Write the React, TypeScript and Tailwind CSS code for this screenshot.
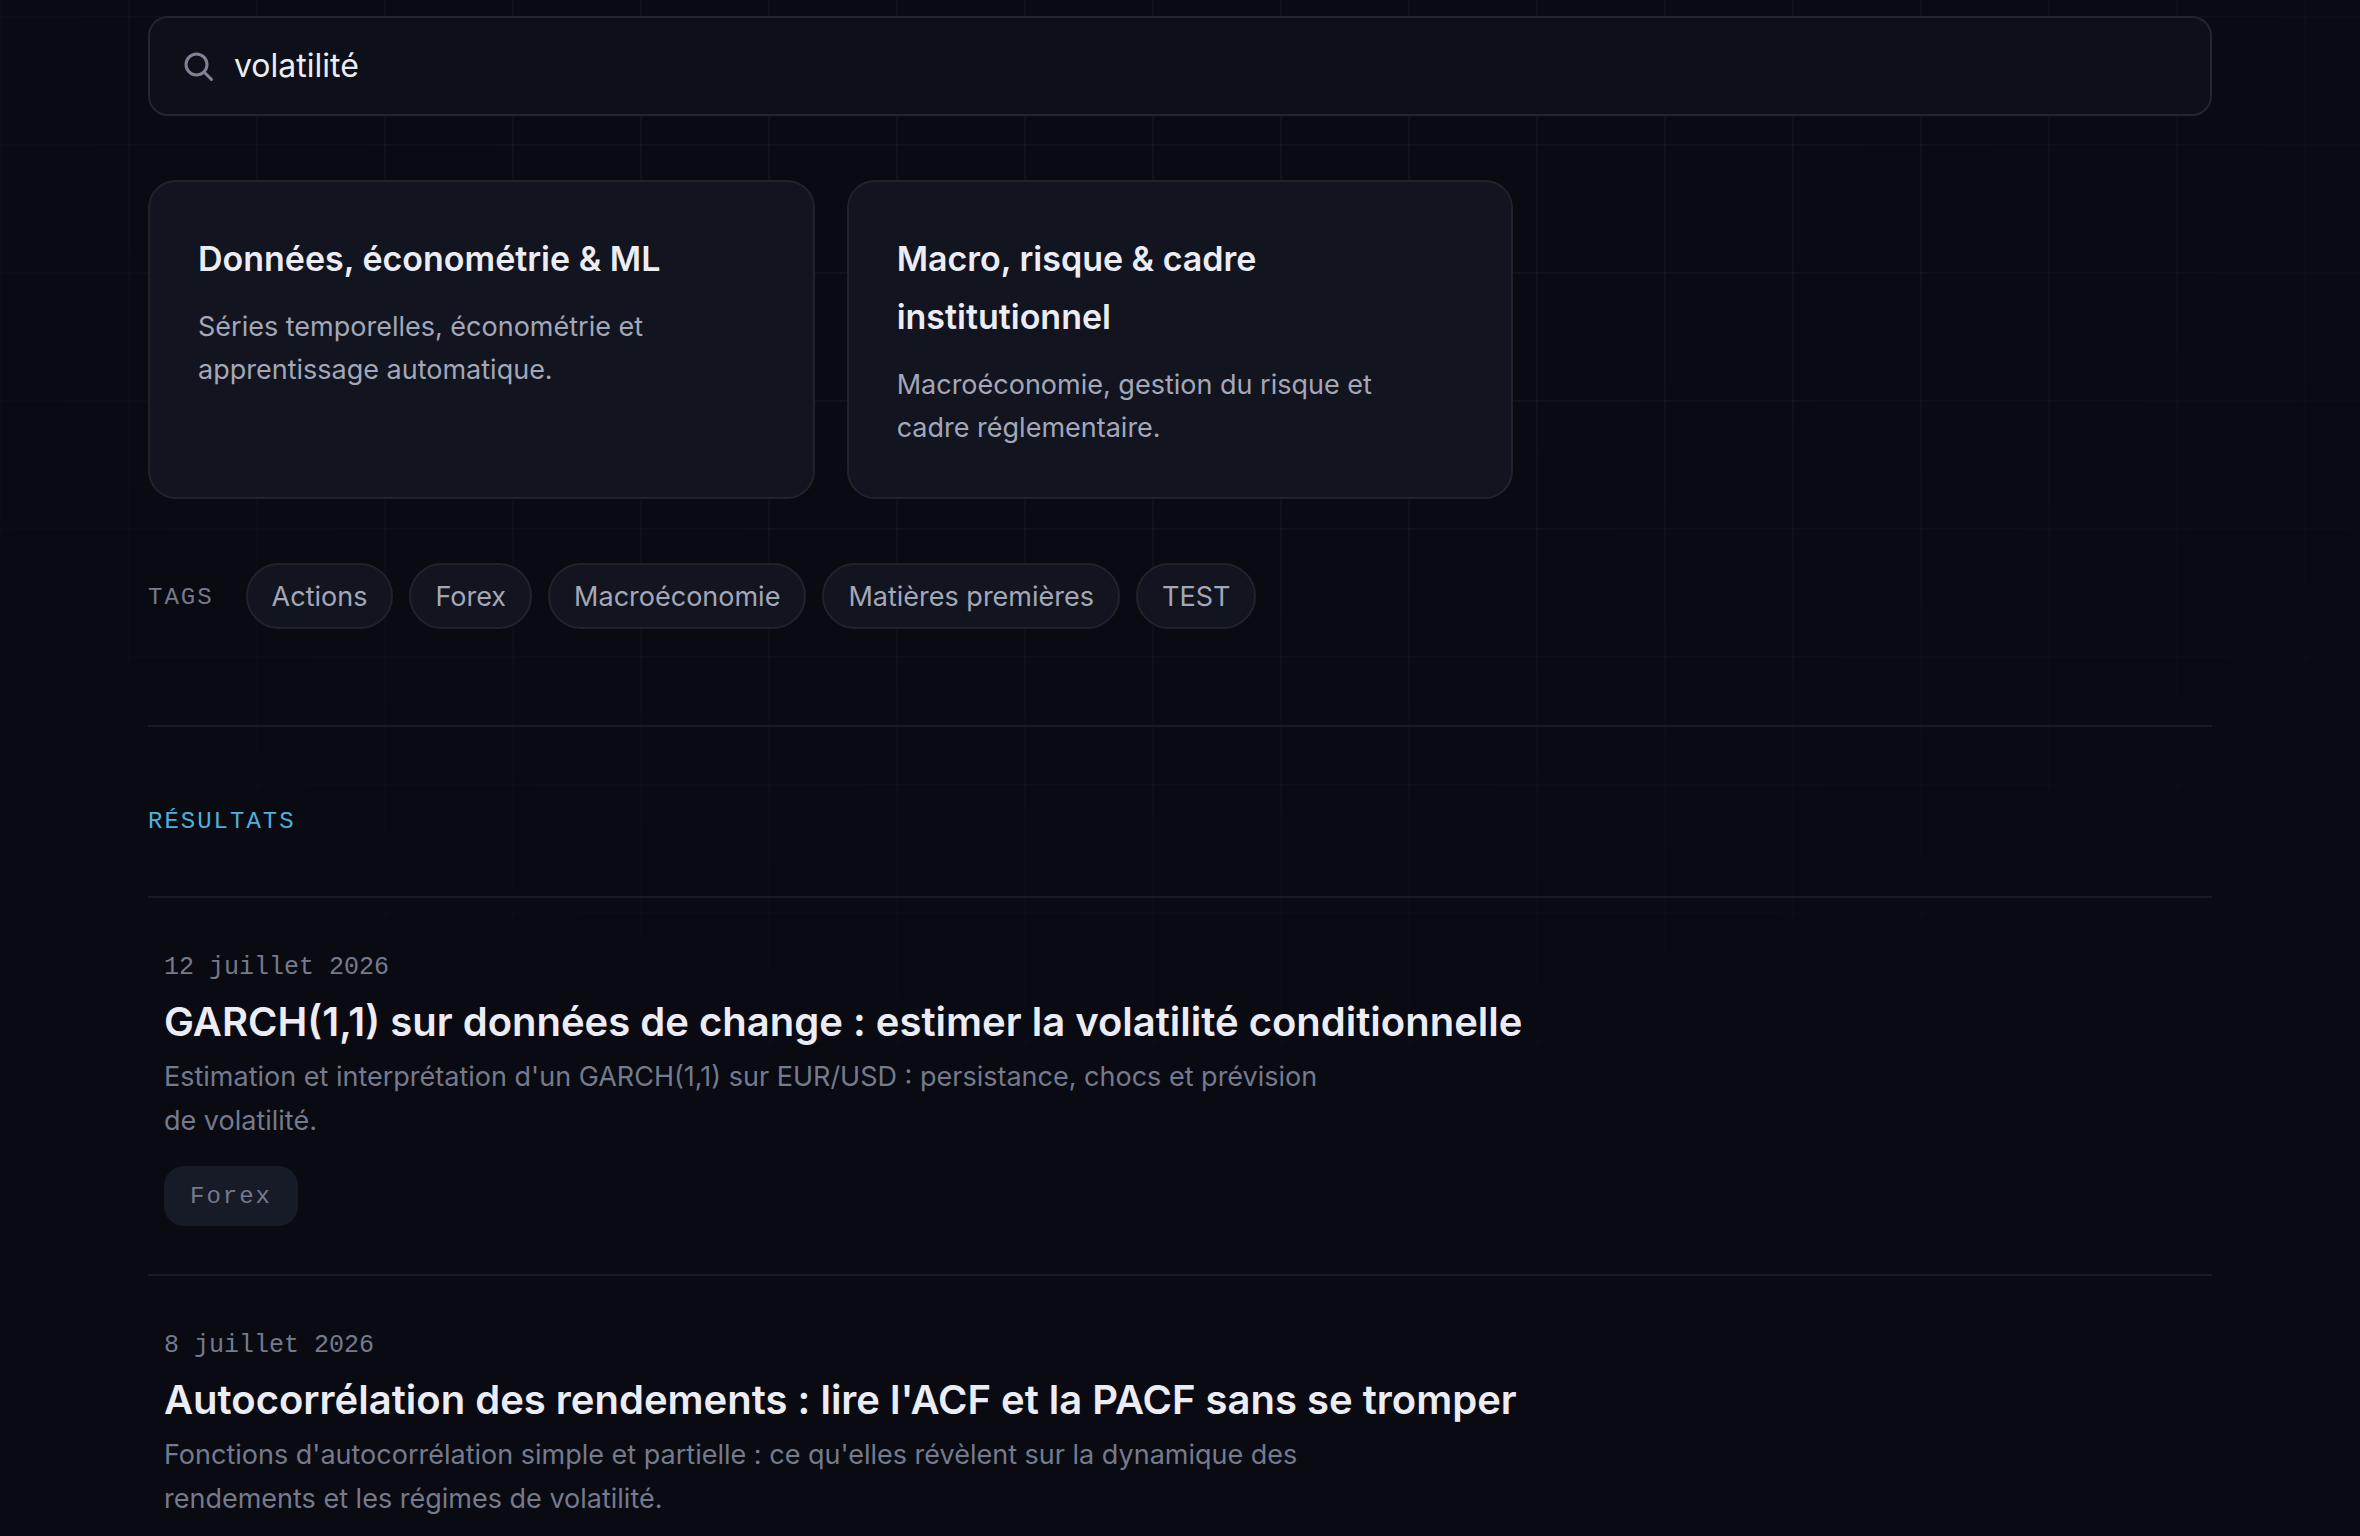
import { useState } from 'react';
import type { ChangeEvent } from 'react';

const categories = [
  {
    title: 'Données, économétrie & ML',
    description: 'Séries temporelles, économétrie et apprentissage automatique.',
  },
  {
    title: 'Macro, risque & cadre institutionnel',
    description: 'Macroéconomie, gestion du risque et cadre réglementaire.',
  },
];

const tags = ['Actions', 'Forex', 'Macroéconomie', 'Matières premières', 'TEST'];

const articles = [
  {
    date: '12 juillet 2026',
    title: 'GARCH(1,1) sur données de change : estimer la volatilité conditionnelle',
    description: "Estimation et interprétation d'un GARCH(1,1) sur EUR/USD : persistance, chocs et prévision de volatilité.",
    tags: ['Forex'],
  },
  {
    date: '8 juillet 2026',
    title: "Autocorrélation des rendements : lire l'ACF et la PACF sans se tromper",
    description:
      "Fonctions d'autocorrélation simple et partielle : ce qu'elles révèlent sur la dynamique des rendements et les régimes de volatilité.",
    tags: [],
  },
];

const SearchIcon = () => (
  <svg
    className="size-9 shrink-0 text-[#7f8294]"
    viewBox="0 0 24 24"
    fill="none"
    stroke="currentColor"
    strokeWidth="2"
    strokeLinecap="round"
    aria-hidden="true"
  >
    <circle cx="11" cy="11" r="7" />
    <path d="m21 21-4.5-4.5" />
  </svg>
);

const App = () => {
  const [query, setQuery] = useState('volatilité');

  const onChange = (e: ChangeEvent<HTMLInputElement>) => {
    setQuery(e.target.value);
  };

  return (
    <div className="relative isolate h-screen overflow-hidden bg-[#090a12] font-['Inter','Liberation_Sans',sans-serif] text-[#ececf4]">
      {/* faded grid behind the page */}
      <div className="pointer-events-none absolute inset-0 -z-10 bg-[linear-gradient(to_right,rgba(255,255,255,0.035)_2px,transparent_2px),linear-gradient(to_bottom,rgba(255,255,255,0.035)_2px,transparent_2px)] bg-[size:128px_128px] bg-[position:0_16px] [mask-image:radial-gradient(ellipse_72%_82%_at_50%_0%,black_30%,transparent_100%)]" />

      <main className="mx-auto max-w-[2064px] pt-4">
        <label className="flex h-[100px] items-center gap-[18px] rounded-[20px] border-2 border-[#22242e] bg-[#0d1018] px-[30px]">
          <SearchIcon />
          <input
            type="text"
            aria-label="Rechercher"
            className="min-w-0 flex-1 bg-transparent text-[32px] text-[#ececf4] outline-none"
            value={query}
            onChange={onChange}
          />
        </label>

        <nav className="mt-16 grid grid-cols-3 gap-8">
          {categories.map((category) => (
            <a
              key={category.title}
              href="#resultats"
              className="flex flex-col gap-[17px] rounded-[28px] border-2 border-[#20222c] bg-[#121520] p-12"
            >
              <h2 className="text-[34px] leading-[58px] font-semibold">{category.title}</h2>
              <p className="max-w-[520px] text-[27px] leading-[43px] text-[#a3a7b8]">{category.description}</p>
            </a>
          ))}
        </nav>

        <div className="mt-16 flex items-center gap-8">
          <span className="pt-1 font-['Liberation_Mono',monospace] text-[24px] tracking-[2px] text-[#757a8c]">TAGS</span>
          <div className="flex gap-4">
            {tags.map((tag) => (
              <button
                key={tag}
                type="button"
                className="h-[66px] rounded-full border-2 border-[#20222c] bg-[#121520] px-6 pt-[2px] text-[27px] text-[#a3a7b8]"
              >
                {tag}
              </button>
            ))}
          </div>
        </div>

        <section id="resultats" className="mt-24 border-t-2 border-[#191a23]">
          <h2 className="pt-[74px] pb-[54px] font-['Liberation_Mono',monospace] text-[24px] leading-[41px] tracking-[2px] text-[#4fb0de]">
            RÉSULTATS
          </h2>
          {articles.map((article) => (
            <article key={article.title} className="border-t-2 border-[#191a23] px-4 pt-[50px] pb-12">
              <time className="block font-['Liberation_Mono',monospace] text-[25px] leading-[40px] text-[#757a8c]">
                {article.date}
              </time>
              <h3 className="text-[40px] leading-[67px] font-semibold">
                <a href="#resultats">{article.title}</a>
              </h3>
              <p className="max-w-[1160px] text-[27px] leading-[44px] text-[#757a8c]">{article.description}</p>
              <div className="mt-[23px] flex gap-4">
                {article.tags.map((tag) => (
                  <span
                    key={tag}
                    className="rounded-[20px] bg-[#171a27] px-[26px] pt-[2px] font-['Liberation_Mono',monospace] text-[24px] leading-[58px] tracking-[2px] text-[#757a8c]"
                  >
                    {tag}
                  </span>
                ))}
              </div>
            </article>
          ))}
        </section>
      </main>
    </div>
  );
};

export default App;
